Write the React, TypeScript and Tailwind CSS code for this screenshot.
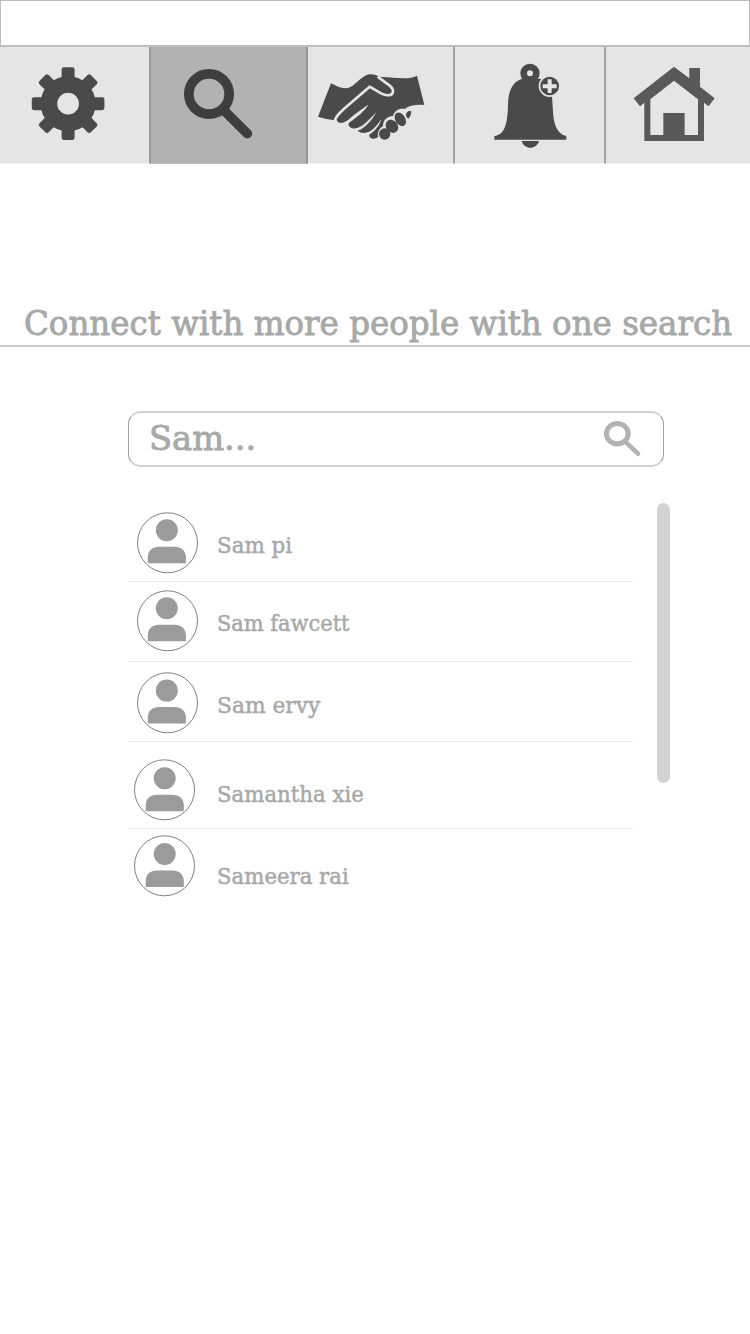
import type { ReactNode } from "react";

const FONT = "font-[Rockwell,'DejaVu_Serif',serif]";

function CellIcon({ box, label, children }: { box: string; label: string; children: ReactNode }) {
  return (
    <svg viewBox={box} className="block h-full w-full" role="img" aria-label={label}>
      {children}
    </svg>
  );
}

function Gear() {
  return (
    <CellIcon box="0 47 149 116" label="Settings">
      <g transform="translate(68.100 103.700) scale(.3333)" fill="#4a4a4a">
        {[0, 45, 90, 135, 180, 225, 270, 315].map((a) => (
          <rect key={a} x="-19.500" y="-109" width="39" height="50" rx="7" transform={`rotate(${a})`} />
        ))}
        <circle r="57.500" fill="none" stroke="#4a4a4a" strokeWidth="50" />
      </g>
    </CellIcon>
  );
}

function Magnifier() {
  return (
    <CellIcon box="151 47 155 116" label="Search">
      <g transform="translate(145 30) scale(.3333)" fill="none" stroke="#3d3f3e" strokeWidth="29" strokeLinecap="round">
        <circle cx="192" cy="192" r="60.5" />
        <path d="M240 244L307 311" />
      </g>
    </CellIcon>
  );
}

function Handshake() {
  return (
    <CellIcon box="308 47 145 116" label="Connections">
      <g transform="translate(300 50) scale(.3333)" fill="#4a4a4a">
        <path d="M93 100C112 110 132 120 150 112C168 103 185 77 208 73C220 71 230 76 236 80L246 81C290 83 328 90 351 77L373 165C350 163 328 166 314 177C298 174 283 182 279 198C262 199 249 209 249 229C238 235 232 246 234 262C224 269 206 267 208 254C212 247 222 239 228 231C209 249 187 254 174 243C174 238 182 231 188 225C168 240 150 238 146 226C144 220 150 214 156 207L137 214C126 222 112 220 109 208L101 210C84 209 68 204 54 200Z" />
        <g fill="#e4e6e5">
          <path d="M205 164C186 176 160 195 139 215L146 219C168 203 192 186 205 164Z" />
          <path d="M228 187C213 205 195 222 172 238L178 241C198 229 217 212 228 187Z" />
          <path d="M244 206C236 220 222 237 203 251L210 253C226 240 239 227 244 206Z" />
        </g>
        <path
          d="M105 211C108 198 122 186 134 175L209 110L243 130C258 138 273 138 278 129C282 120 275 112 268 106L233 80"
          fill="none"
          stroke="#e4e6e5"
          strokeWidth="8"
          strokeLinejoin="round"
        />
        <ellipse cx="254" cy="252" rx="17" ry="17" />
        <ellipse cx="276" cy="229" rx="17.500" ry="21" transform="rotate(-38 276 229)" />
        <ellipse cx="301" cy="208" rx="15" ry="22" transform="rotate(-32 301 208)" />
        <path d="M319 190C323 184 330 180 333 184C335 192 331 201 325 206C319 202 316 196 319 190Z" />
      </g>
    </CellIcon>
  );
}

function Bell() {
  return (
    <CellIcon box="455 47 149 116" label="Notifications">
      <g transform="translate(450 40) scale(.3333)" fill="#4a4a4a">
        <circle cx="240" cy="100" r="19" fill="none" stroke="#4a4a4a" strokeWidth="20" />
        <path d="M216 116C188 125 175 152 174 192C173 250 165 284 133 288V299H349V288C320 282 311 250 309 215L306 168L272 116Z" />
        <path d="M215 303H267C260 330 222 330 215 303Z" />
        <circle cx="299" cy="138" r="33" fill="#e4e6e5" />
        <circle cx="299" cy="138" r="28" />
        <path d="M299 118V159M278 138.500H320" stroke="#e4e6e5" strokeWidth="12" />
      </g>
    </CellIcon>
  );
}

function House() {
  return (
    <CellIcon box="606 47 144 116" label="Home">
      <path
        transform="translate(600 40) scale(.3333)"
        fill="#58595b"
        fillRule="evenodd"
        d="M101 175L222 80L268 115V84H300V140L344 175L326 199L312 188V303H133V188L120 199ZM151 178L222 122L294 178V285H254V219H190V285H151Z"
      />
    </CellIcon>
  );
}

function Avatar({ shift, className }: { shift: string; className: string }) {
  return (
    <svg viewBox="0 0 62 62" className={`block h-[62px] w-[62px] shrink-0 ${className}`} aria-hidden="true">
      <circle cx="30.500" cy="30.800" r="30" fill="#fff" stroke="#808080" strokeWidth="1" />
      <g transform={`translate(${shift})`} fill="#9a9c9b">
        <circle cx="29.800" cy="18.300" r="11" />
        <path d="M10.800 51.300V45.500C10.800 38.500 15.500 34.700 22 34.700H37.500C44 34.700 48.900 38.500 48.900 45.500V51.300Z" />
      </g>
    </svg>
  );
}

const people = [
  { name: "Sam pi", row: "h-[79px]", avatar: "ml-[9px] mt-[9px]", text: "ml-[18px] mt-[30px] scale-x-[0.974]", shift: "0 0" },
  { name: "Sam fawcett", row: "h-[80px]", avatar: "ml-[9px] mt-[8px]", text: "ml-[18px] mt-[29px] scale-x-[0.952]", shift: "0 0" },
  { name: "Sam ervy", row: "h-[80px]", avatar: "ml-[9px] mt-[10px]", text: "ml-[18px] mt-[31px] scale-x-[0.99]", shift: "0 0.3" },
  { name: "Samantha xie", row: "h-[87px]", avatar: "ml-[6px] mt-[17px]", text: "ml-[21px] mt-[40px] scale-x-[0.966]", shift: "0.9 1" },
  { name: "Sameera rai", row: "h-[80px]", avatar: "ml-[6px] mt-[6px]", text: "ml-[21px] mt-[35px] scale-x-[0.966]", shift: "0.9 0.7" },
];

export default function App() {
  return (
    <main className={`flex h-[1334px] w-[750px] flex-col overflow-hidden bg-white text-[#a7a9a8] ${FONT}`}>
      <div className="h-[47px] shrink-0 border border-b-2 border-[#bcbebd]" />
      <nav className="grid h-[117px] shrink-0 grid-cols-[151px_157px_147px_151px_144px] bg-[#e4e6e5]">
        <div className="border-r-2 border-b border-r-[#979998] border-b-[#f1f2f2]"><Gear /></div>
        <div className="border-r-2 border-b border-r-[#979998] border-b-[#bcbebd] bg-[#b1b3b2]"><Magnifier /></div>
        <div className="border-r-2 border-b border-r-[#a1a3a2] border-b-[#f1f2f2]"><Handshake /></div>
        <div className="border-r-2 border-b border-r-[#a1a3a2] border-b-[#f1f2f2]"><Bell /></div>
        <div className="border-b border-b-[#f1f2f2]"><House /></div>
      </nav>

      <h1 className="mt-[137px] flex h-[46px] shrink-0 border-b-2 border-[#c9cbca] pl-[24px] text-[34px] leading-[44px] whitespace-nowrap">
        <span className="block origin-left scale-x-[0.956] [-webkit-text-stroke:0.9px_#a7a9a8]">Connect with more people with one search</span>
      </h1>

      <div className="mt-[64px] ml-[128px] flex h-[56px] w-[536px] shrink-0 items-start justify-between rounded-[13px] border-x border-y-2 border-x-[#a0a0a0] border-y-[#d0d2d1] pr-[20px] pl-[20px]">
        <span className="mt-[3px] block origin-left scale-x-[0.99] text-[34px] leading-[44px] [-webkit-text-stroke:0.9px_#a7a9a8]">Sam...</span>
        <svg viewBox="38 58 120 120" className="mt-[6px] block h-[40px] w-[40px]" role="img" aria-label="Search">
          <g fill="none" stroke="#b1b3b2" strokeLinecap="round">
            <ellipse cx="81" cy="102" rx="32.500" ry="30.500" strokeWidth="15" />
            <path d="M107 128L143 162" strokeWidth="14" />
          </g>
        </svg>
      </div>

      <div className="mt-[36px] ml-[128px] flex shrink-0">
        <ul className="w-[505px]">
          {people.map((p) => (
            <li key={p.name} className={`box-border flex items-start border-b border-[#e6e7e8] last:border-b-0 ${p.row}`}>
              <Avatar shift={p.shift} className={p.avatar} />
              <span className={`block origin-left text-[22px] leading-[26px] whitespace-nowrap [-webkit-text-stroke:0.5px_#a7a9a8] ${p.text}`}>
                {p.name}
              </span>
            </li>
          ))}
        </ul>
        <div className="ml-[24px] h-[280px] w-[13px] rounded-full bg-[#d1d3d4]" />
      </div>
    </main>
  );
}
